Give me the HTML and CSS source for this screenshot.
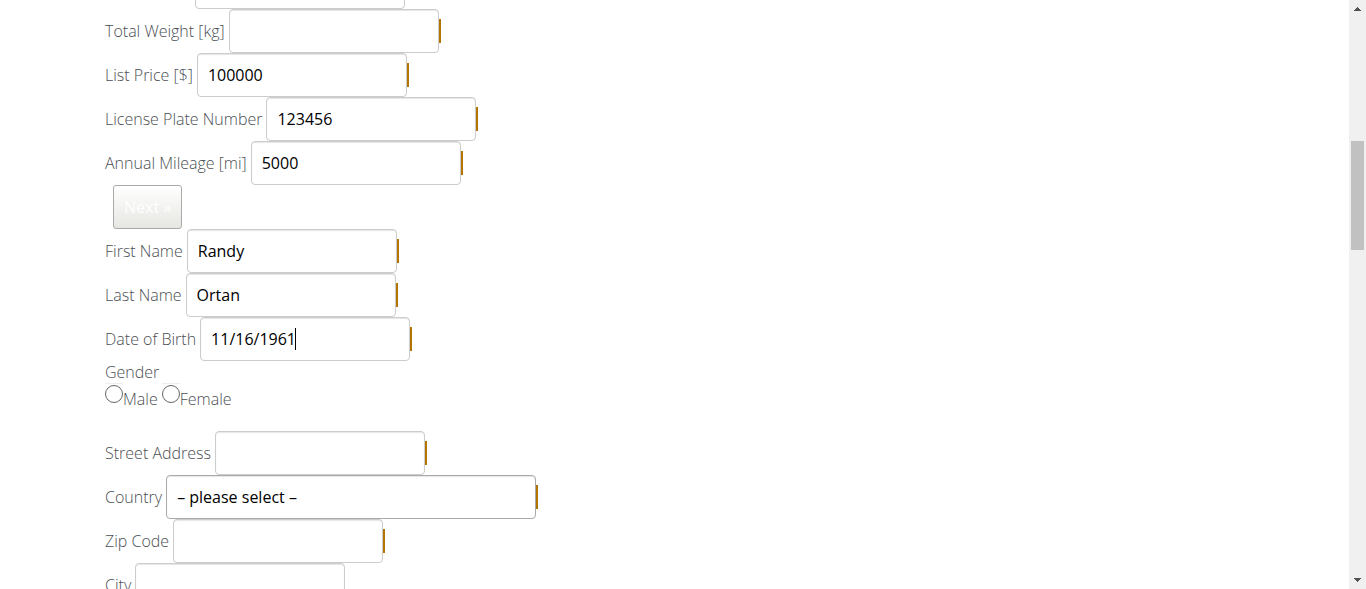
FILE: index.html
```html
<!DOCTYPE html>
<html lang="en">
<head>
<meta charset="utf-8">
<title>Insurant Data</title>
<link rel="stylesheet" href="styles.css">
</head>
<body>
<div class="window">
  <form class="form">
    <div class="row row-first"><span class="field"><input class="text" type="text" aria-label="Payload"></span></div>
    <div class="row"><label for="weight">Total Weight [kg]</label><span class="field required"><input class="text" id="weight" type="text"></span></div>
    <div class="row"><label for="price">List Price [$]</label><span class="field required"><input class="text" id="price" type="text" value="100000"></span></div>
    <div class="row"><label for="plate">License Plate Number</label><span class="field required"><input class="text" id="plate" type="text" value="123456"></span></div>
    <div class="row"><label for="mileage">Annual Mileage [mi]</label><span class="field required"><input class="text" id="mileage" type="text" value="5000"></span></div>
    <div class="row row-button"><button class="next" type="button">Next »</button></div>
    <div class="row"><label for="first">First Name</label><span class="field required"><input class="text" id="first" type="text" value="Randy"></span></div>
    <div class="row"><label for="last">Last Name</label><span class="field required"><input class="text" id="last" type="text" value="Ortan"></span></div>
    <div class="row"><label for="birth">Date of Birth</label><span class="field required"><input class="text" id="birth" type="text" value="11/16/1961"><span class="caret"></span></span></div>
    <div class="gender" role="radiogroup" aria-labelledby="gender-title">
      <div id="gender-title">Gender</div>
      <div class="options">
        <label class="option"><span class="radio-box"><input class="radio" type="radio" name="gender"></span><span class="option-text">Male</span></label>
        <label class="option"><span class="radio-box"><input class="radio" type="radio" name="gender"></span><span class="option-text">Female</span></label>
      </div>
    </div>
    <div class="row"><label for="street">Street Address</label><span class="field required"><input class="text" id="street" type="text"></span></div>
    <div class="row"><label for="country">Country</label><span class="field required"><select class="text select" id="country"><option>– please select –</option></select></span></div>
    <div class="row"><label for="zip">Zip Code</label><span class="field required"><input class="text" id="zip" type="text"></span></div>
    <div class="row"><label for="city">City</label><span class="field"><input class="text" id="city" type="text"></span></div>
  </form>
  <div class="scrollbar">
    <svg class="arrow" viewBox="0 0 17 17" shape-rendering="crispEdges"><path d="M8 7h1v1h1v1h1v1h1v1H5v-1h1V9h1V8h1z"/></svg>
    <div class="track"><div class="thumb"></div></div>
    <svg class="arrow" viewBox="0 0 17 17" shape-rendering="crispEdges"><path d="M5 6h7v1h-1v1h-1v1H9v1H8V9H7V8H6V7H5z"/></svg>
  </div>
</div>
</body>
</html>
```
FILE: styles.css
```css
* { box-sizing: border-box; }

body {
  margin: 0;
  background: #fff;
  color: #4b4f54;
  font: 300 16px/22px "Open Sans", sans-serif;
}

.window {
  display: flex;
  height: 100vh;
  overflow: hidden;
}

.form {
  flex: 1;
  margin-top: -35px;
  padding-left: 105px;
}

.row {
  display: flex;
  align-items: center;
  gap: 4px;
  height: 44px;
}

.row-first { padding-left: 90px; }
.row-button { padding-left: 8px; }

.field {
  position: relative;
  display: flex;
  align-items: center;
}

.required::after {
  content: "";
  width: 2px;
  height: 24px;
  background: #b37400;
}

.text {
  width: 210px;
  height: 44px;
  padding: 0 10px;
  border: 1px solid #ccc;
  border-radius: 4px;
  outline: none;
  background: #fff;
  box-shadow: inset 0 1px 1px rgba(0, 0, 0, 0.1);
  color: #000;
  font: 400 16px/22px "Open Sans", sans-serif;
}

.select {
  width: 370px;
  border-color: #aaa;
  appearance: none;
}

.caret {
  position: absolute;
  top: 11px;
  left: 95px;
  width: 1px;
  height: 22px;
  background: #000;
}

.next {
  height: 44px;
  padding: 0 10px;
  border: 1px solid #aaa;
  border-radius: 3px;
  background: linear-gradient(#fff, #e6e6e2);
  color: #fff;
  font: 400 16px/22px "Open Sans", sans-serif;
}

.gender { padding-bottom: 22px; }

.options {
  display: flex;
  gap: 4px;
}

.option {
  display: flex;
  height: 26px;
}

.radio-box {
  display: flex;
  height: 20px;
  border-top: 1px solid #eee;
}

.radio {
  appearance: none;
  width: 18px;
  height: 18px;
  margin: 1px 0 0;
  border: 1px solid #666;
  border-radius: 50%;
}

.option-text { padding-top: 5px; }

.scrollbar {
  display: flex;
  flex-direction: column;
  width: 17px;
  background: #f0f0f0;
}

.arrow {
  width: 17px;
  height: 17px;
  fill: #505050;
}

.track {
  flex: 1;
  padding: 0 2px;
}

.thumb {
  height: 109px;
  margin-top: 124px;
  background: #c1c1c1;
}
```
